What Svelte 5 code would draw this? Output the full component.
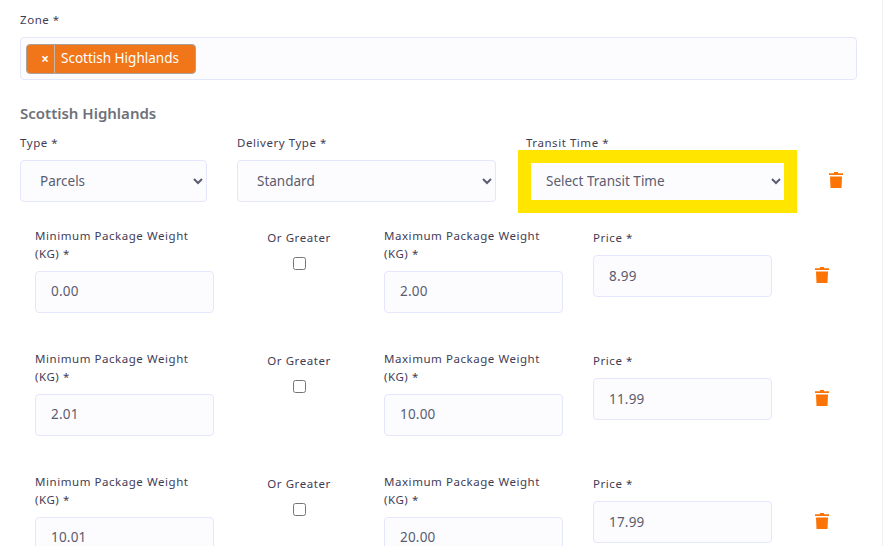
<script>
  const rows = [
    { min: '0.00', max: '2.00', price: '8.99' },
    { min: '2.01', max: '10.00', price: '11.99' },
    { min: '10.01', max: '20.00', price: '17.99' }
  ];
</script>

{#snippet trash()}
  <svg class="trash" viewBox="0 0 14 16" width="14" height="16" aria-hidden="true">
    <path d="M0 1.2h4.8L5.2 0h3.6l.4 1.2H14V3H0z" fill="#fb7405" />
    <path d="M1 4.4h12l-.5 11.6H1.5z" fill="#fb7405" />
  </svg>
{/snippet}

<main class="page">
  <label class="label" for="zone">Zone *</label>
  <div class="zone" id="zone">
    <span class="tag"><span class="tag-x">×</span><span class="tag-text">Scottish Highlands</span></span>
  </div>

  <h2>Scottish Highlands</h2>

  <div class="top">
    <div class="type">
      <label class="label" for="type">Type *</label>
      <select id="type"><option>Parcels</option></select>
    </div>
    <div class="delivery">
      <label class="label" for="delivery">Delivery Type *</label>
      <select id="delivery"><option>Standard</option></select>
    </div>
    <div class="transit">
      <label class="label" for="transit">Transit Time *</label>
      <select id="transit"><option>Select Transit Time</option></select>
    </div>
    <button class="del top-del" aria-label="Delete">{@render trash()}</button>
  </div>

  <div class="rows">
    {#each rows as r}
      <div class="row">
        <div class="col">
          <span class="label two">Minimum Package Weight (KG) *</span>
          <input value={r.min} />
        </div>
        <div class="greater">
          <span class="label">Or Greater</span>
          <input type="checkbox" />
        </div>
        <div class="col">
          <span class="label two">Maximum Package Weight (KG) *</span>
          <input value={r.max} />
        </div>
        <div class="col price">
          <span class="label">Price *</span>
          <input value={r.price} />
        </div>
        <button class="del row-del" aria-label="Delete">{@render trash()}</button>
      </div>
    {/each}
  </div>
</main>

<style>
  :global(body) {
    margin: 0;
    background: #fff;
    overflow: hidden;
  }
  .page {
    box-sizing: border-box;
    width: 883px;
    height: 546px;
    overflow: hidden;
    padding: 11px 25px 0 20px;
    border-right: 1px solid #f1f1f1;
    font-family: "Noto Sans", sans-serif;
    color: #5a5c70;
  }
  .label {
    display: block;
    font-size: 11.5px;
    line-height: 18px;
    letter-spacing: 0.55px;
    color: #3f3d56;
  }
  .zone {
    box-sizing: border-box;
    height: 43px;
    margin-top: 8px;
    padding: 6px 5px;
    background: #fcfcff;
    border: 1px solid #e4e6fb;
    border-radius: 4px;
  }
  .tag {
    display: inline-flex;
    box-sizing: border-box;
    height: 30px;
    align-items: center;
    background: #f1761a;
    border: 1px solid #a9a29b;
    border-radius: 4px;
    color: #fff;
    font-size: 13.5px;
    line-height: 26px;
  }
  .tag-x {
    display: flex;
    box-sizing: border-box;
    width: 28px;
    height: 100%;
    padding-left: 9px;
    align-items: center;
    justify-content: center;
    border-right: 1px solid #c9b5a5;
    font-weight: 700;
  }
  .tag-text {
    padding: 0 16px 2px 6px;
  }
  h2 {
    margin: 23px 0 0;
    font-size: 15px;
    line-height: 20px;
    font-weight: 600;
    color: #6e7179;
  }
  .top {
    display: flex;
    margin-top: 11px;
    height: 93px;
  }
  select,
  input:not([type="checkbox"]) {
    box-sizing: border-box;
    display: block;
    height: 42px;
    background: #fcfcff;
    border: 1px solid #e4e6fb;
    border-radius: 4px;
    color: #5a5c70;
    font-family: inherit;
    font-size: 13.5px;
  }
  select {
    width: 100%;
    padding: 0 4px 0 15px;
    margin-top: 8px;
  }
  input:not([type="checkbox"]) {
    width: 100%;
    padding: 0 15px;
    outline: none;
    letter-spacing: 0.2px;
  }
  .two + input:not([type="checkbox"]) {
    padding-bottom: 2px;
  }
  .type {
    width: 187px;
    margin-right: 30px;
  }
  .delivery {
    width: 259px;
    margin-right: 30px;
  }
  .transit {
    width: 249px;
  }
  .transit select {
    width: 279px;
    height: 63px;
    margin: -2px 0 0 -8px;
    padding: 0 0 2px 11px;
    border: 13px solid #ffe500;
    border-radius: 0;
  }
  .del {
    display: flex;
    padding: 0;
    background: none;
    border: 0;
  }
  .top-del {
    margin: 38px 0 0 54px;
    height: 16px;
  }
  .rows {
    padding-left: 15px;
  }
  .row {
    display: flex;
    height: 123px;
    box-sizing: border-box;
  }
  .col {
    width: 179px;
  }
  .col input {
    margin-top: 8px;
  }
  .two {
    height: 36px;
    width: 165px;
  }
  .greater {
    width: 170px;
    display: flex;
    flex-direction: column;
    align-items: center;
    padding-top: 2px;
  }
  .greater input {
    width: 13px;
    height: 13px;
    margin: 10px 0 0;
  }
  .price {
    margin-left: 30px;
    padding-top: 2px;
  }
  .price input {
    margin-top: 8px;
  }
  .row-del {
    margin: 40px 0 0 43px;
    height: 16px;
  }
</style>
